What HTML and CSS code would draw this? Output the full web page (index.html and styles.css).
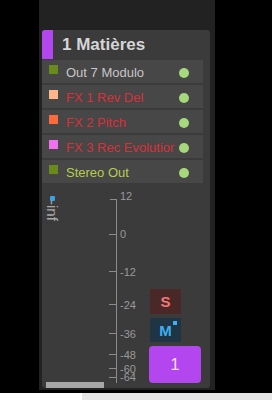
FILE: index.html
```html
<!DOCTYPE html>
<html>
<head>
<meta charset="utf-8">
<link rel="stylesheet" href="styles.css">
</head>
<body>
<div class="page">
  <div class="strip">
    <div class="inner">
      <div class="header">
        <div class="color-bar"></div>
        <div class="title">1 Matières</div>
      </div>
      <div class="rows">
        <div class="row"><span class="sq" style="background:#6b8a1c"></span><span class="name name-grey">Out 7 Modulo</span><span class="dot"></span></div>
        <div class="row"><span class="sq" style="background:#ffb68a"></span><span class="name name-red">FX 1 Rev Del</span><span class="dot"></span></div>
        <div class="row"><span class="sq" style="background:#ff6a3c"></span><span class="name name-red">FX 2 Pitch</span><span class="dot"></span></div>
        <div class="row"><span class="sq" style="background:#f070f0"></span><span class="name name-red">FX 3 Rec Evolution</span><span class="dot"></span></div>
        <div class="row"><span class="sq" style="background:#6b8a1c"></span><span class="name name-green">Stereo Out</span><span class="dot"></span></div>
      </div>
      <div class="meter">
        <div class="peak">
          <span class="peak-dot"></span>
          <span class="peak-text">-inf</span>
        </div>
        <div class="scale">
          <div class="scale-line"></div>
          <span class="tick tick-right" style="top:0px"></span><span class="lbl" style="top:-8px">12</span>
          <span class="tick" style="top:35px"></span><span class="lbl" style="top:30px">0</span>
          <span class="tick" style="top:72px"></span><span class="lbl" style="top:68px">-12</span>
          <span class="tick" style="top:105px"></span><span class="lbl" style="top:101px">-24</span>
          <span class="tick" style="top:134px"></span><span class="lbl" style="top:130px">-36</span>
          <span class="tick" style="top:155px"></span><span class="lbl" style="top:151px">-48</span>
          <span class="tick" style="top:169px"></span><span class="lbl" style="top:165px">-60</span>
          <span class="tick" style="top:178px"></span><span class="lbl" style="top:173px">-64</span>
        </div>
        <div class="buttons">
          <div class="btn btn-s">S</div>
          <div class="btn btn-m">M<span class="m-mark"></span></div>
          <div class="btn btn-num">1</div>
        </div>
      </div>
      <div class="hscroll"></div>
    </div>
  </div>
  <div class="bottom">
    <div class="bottom-white"></div>
    <div class="bottom-grey"></div>
  </div>
</div>
</body>
</html>
```
FILE: styles.css
```css
* { box-sizing: border-box; }
html, body {
  margin: 0;
  padding: 0;
  background: #000;
  font-family: "Liberation Sans", Arial, sans-serif;
}
.page {
  width: 272px;
  height: 400px;
  display: flex;
  flex-direction: column;
}
.strip {
  margin-left: 39px;
  width: 176px;
  height: 390px;
  background: #222222;
  padding: 30px 5px 2px 3px;
}
.inner {
  position: relative;
  height: 358px;
  background: #3b3b3b;
  border-radius: 3px;
  display: flex;
  flex-direction: column;
  overflow: hidden;
}
.header {
  height: 29px;
  display: flex;
  align-items: center;
  flex-shrink: 0;
}
.color-bar {
  width: 11px;
  height: 29px;
  background: #b446f0;
}
.title {
  margin-left: 9px;
  font-size: 17px;
  font-weight: bold;
  color: #d6d6d6;
}
.rows {
  margin-top: 1px;
  padding-right: 7px;
  display: flex;
  flex-direction: column;
  gap: 2px;
  flex-shrink: 0;
}
.row {
  height: 23px;
  background: #474747;
  display: flex;
  align-items: center;
}
.sq {
  width: 9px;
  height: 9px;
  margin-left: 7px;
  align-self: flex-start;
  margin-top: 5px;
  flex-shrink: 0;
}
.name {
  margin-left: 8px;
  width: 109px;
  font-size: 13px;
  white-space: nowrap;
  overflow: hidden;
  flex-shrink: 0;
  margin-top: 1px;
}
.name-grey { color: #c6c6c6; }
.name-red { color: #d8303a; }
.name-green { color: #b6cc4e; }
.dot {
  width: 10px;
  height: 10px;
  border-radius: 50%;
  background: #a6d87c;
  margin-left: 4px;
  margin-top: 2px;
}
.meter {
  flex: 1;
  display: flex;
  position: relative;
}
.peak {
  width: 74px;
  position: relative;
}
.peak-dot {
  position: absolute;
  left: 8px;
  top: 13px;
  width: 5px;
  height: 5px;
  background: #3aa2e6;
  border-radius: 1px;
}
.peak-text {
  position: absolute;
  left: 4px;
  top: 17px;
  writing-mode: vertical-rl;
  font-size: 15px;
  color: #a8a8a8;
  line-height: 13px;
}
.scale {
  width: 33px;
  position: relative;
  margin-top: 16px;
}
.scale-line {
  position: absolute;
  left: 0;
  top: 0;
  width: 1px;
  height: 184px;
  background: #8c8c8c;
}
.tick {
  position: absolute;
  left: -7px;
  width: 7px;
  height: 1px;
  background: #8c8c8c;
}
.tick-right { left: -6px; }
.lbl {
  position: absolute;
  left: 4px;
  font-size: 11px;
  line-height: 11px;
  color: #9a9a9a;
}
.buttons {
  width: 52px;
  display: flex;
  flex-direction: column;
  align-items: flex-start;
  justify-content: flex-end;
  padding-bottom: 5px;
  gap: 4px;
}
.btn {
  display: flex;
  align-items: center;
  justify-content: center;
  position: relative;
}
.btn-s {
  width: 31px;
  height: 25px;
  background: #4a2828;
  color: #f27878;
  font-weight: bold;
  font-size: 15px;
  margin-left: 1px;
}
.btn-m {
  width: 31px;
  height: 24px;
  background: #1f3444;
  color: #3cb0f2;
  font-weight: bold;
  font-size: 15px;
  margin-left: 1px;
}
.m-mark {
  position: absolute;
  left: 23px;
  top: 3px;
  width: 4px;
  height: 4px;
  background: #3cb0f2;
}
.btn-num {
  width: 52px;
  height: 37px;
  background: #b446f0;
  color: #f0dcf4;
  font-size: 17px;
  border-radius: 4px;
}
.hscroll {
  position: absolute;
  left: 4px;
  bottom: 0;
  width: 58px;
  height: 6px;
  background: #a6a6a6;
}
.bottom {
  margin-top: 3px;
  height: 7px;
  display: flex;
}
.bottom-white {
  width: 82px;
  background: #ffffff;
}
.bottom-grey {
  flex: 1;
  background: #e6e6e6;
}
```
